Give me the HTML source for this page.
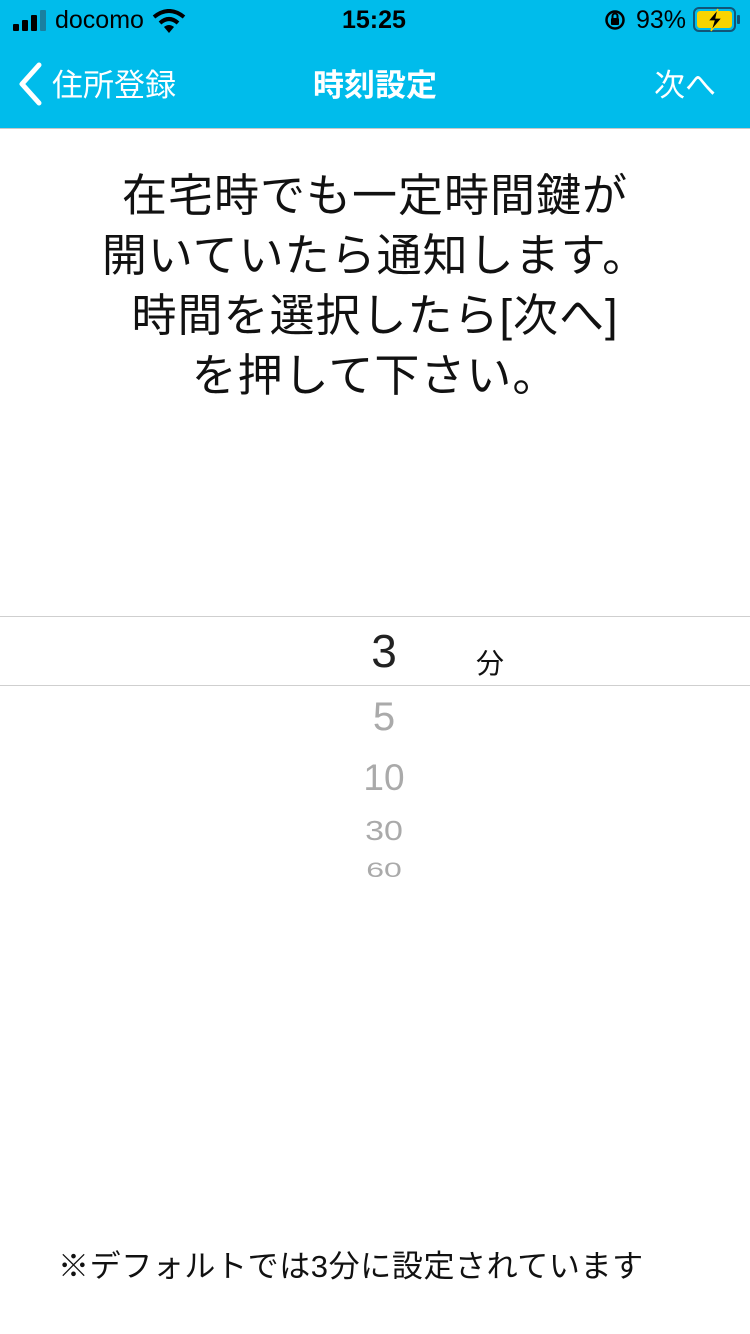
<!DOCTYPE html>
<html><head><meta charset="utf-8"><style>
*{margin:0;padding:0;box-sizing:border-box}
body{width:750px;height:1334px;background:#fff;font-family:"Liberation Sans","Noto Sans CJK JP",sans-serif;position:relative;overflow:hidden}
.nav{position:absolute;left:0;top:0;width:750px;height:129px;background:#00BCEB;border-bottom:1px solid #c8c8c8}
.a{position:absolute;white-space:nowrap}
.msg{position:absolute;left:0;width:750px;top:166px;text-align:center;font-size:45px;letter-spacing:1px;line-height:60px;color:#111}
.line{position:absolute;left:0;width:750px;height:1px;background:#cfcfcf}
.g{color:#aaa;position:absolute;left:334px;width:100px;text-align:center}
</style></head><body>
<div class="nav">
 <div class="a" style="left:13px;top:10px;">
  <svg width="34" height="22" viewBox="0 0 34 22"><rect x="0" y="14" width="6" height="7" rx="1"/><rect x="9" y="10" width="6" height="11" rx="1"/><rect x="18" y="5" width="6" height="16" rx="1"/><rect x="27" y="0" width="6" height="21" rx="1" fill="#1a7fa0"/></svg></div>
 <div class="a" style="left:55px;top:6px;font-size:25px;color:#000">docomo</div>
 <svg class="a" style="left:152px;top:9px" width="34" height="24" viewBox="0 0 34 24"><path d="M2 8 Q17 -4 32 8" stroke="#000" stroke-width="4" fill="none"/><path d="M8 14 Q17 6 26 14" stroke="#000" stroke-width="4" fill="none"/><path d="M12 18 L17 24 L22 18 Q17 14 12 18Z"/></svg>
 <div class="a" style="left:342px;top:6px;font-size:25px;font-weight:bold;color:#000">15:25</div>
 <svg class="a" style="left:604px;top:9px" width="22" height="22" viewBox="0 0 22 22"><circle cx="11" cy="11" r="8.5" stroke="#000" stroke-width="2.5" fill="none"/><rect x="7" y="9" width="8" height="7" rx="1"/><path d="M8.5 9 V7 a2.5 2.5 0 0 1 5 0 V9" stroke="#000" stroke-width="2" fill="none"/></svg>
 <div class="a" style="left:636px;top:6px;font-size:25px;color:#000">93%</div>
 <svg class="a" style="left:693px;top:7px" width="48" height="26" viewBox="0 0 48 26"><rect x="1" y="1" width="41" height="23" rx="5" stroke="#157" stroke-width="2" fill="none"/><rect x="4" y="4" width="35" height="17" rx="3" fill="#f8d400"/><rect x="44" y="8" width="3" height="9" rx="1" fill="#157"/><path d="M25 2 L15 14 H21 L18 24 L29 11 H23 Z" fill="#000" stroke="#f8d400" stroke-width="1.2"/></svg>
 <svg class="a" style="left:16px;top:62px" width="28" height="44" viewBox="0 0 28 44"><path d="M23 3 L6 22 L23 41" stroke="#fff" stroke-width="5" fill="none" stroke-linecap="round" stroke-linejoin="round"/></svg>
 <div class="a" style="left:52px;top:60px;font-size:31px;color:#fff">住所登録</div>
 <div class="a" style="left:0;width:750px;text-align:center;top:60px;font-size:31px;font-weight:bold;color:#fff">時刻設定</div>
 <div class="a" style="left:654px;top:60px;font-size:31px;color:#fff">次へ</div>
</div>
<div class="msg">在宅時でも一定時間鍵が<br>開いていたら通知します。<br>時間を選択したら[次へ]<br>を押して下さい。</div>
<div class="line" style="top:616px"></div>
<div class="line" style="top:685px"></div>
<div class="a" style="left:334px;width:100px;text-align:center;top:624px;font-size:46px;color:#222">3</div>
<div class="a" style="left:476px;top:642px;font-size:28px;color:#111">分</div>
<div class="g" style="top:695px;font-size:40px">5</div>
<div class="g" style="top:757px;font-size:37px">10</div>
<div class="g" style="top:812px;font-size:34px;transform:scaleY(0.82)">30</div>
<div style="position:absolute;left:334px;top:862px;width:100px;height:24px;overflow:hidden"><div class="g" style="left:0;top:-4px;font-size:32px;transform:scaleY(0.65);transform-origin:top">60</div></div>
<div class="a" style="left:58px;top:1241px;font-size:31px;letter-spacing:0.6px;color:#111">※デフォルトでは3分に設定されています</div>
</body></html>
